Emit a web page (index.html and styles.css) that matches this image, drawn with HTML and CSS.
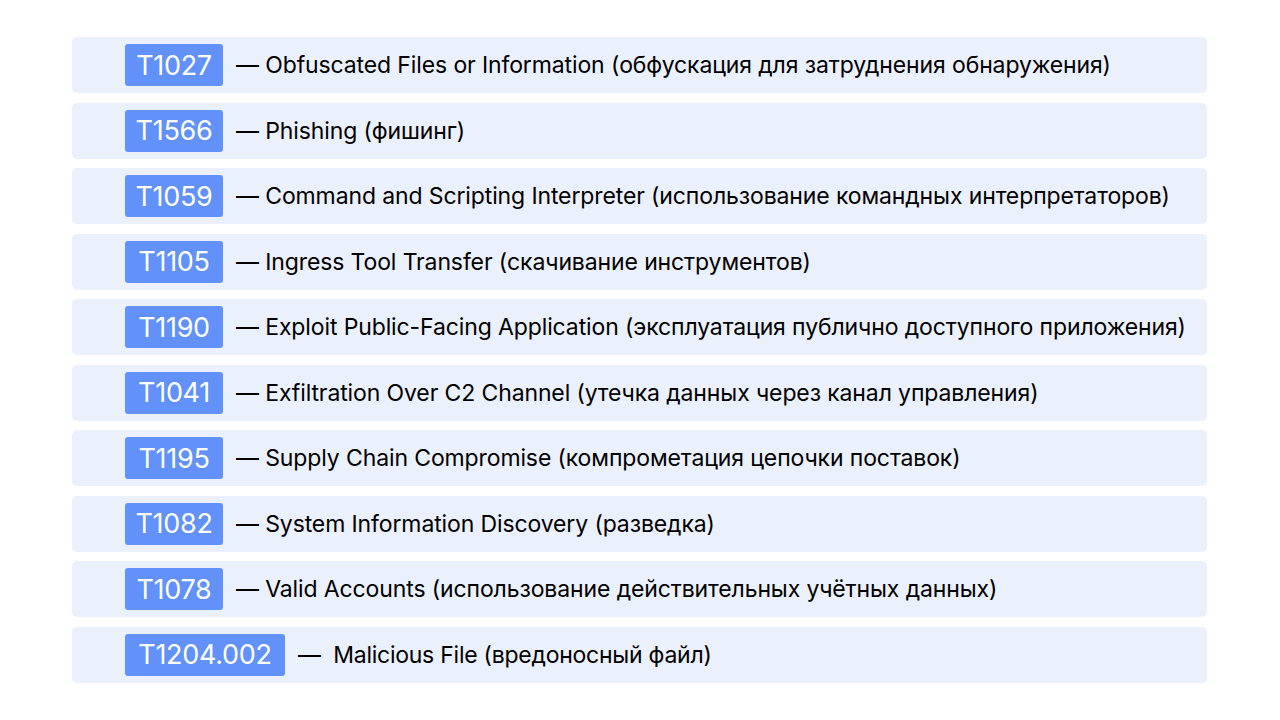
FILE: index.html
```html
<!DOCTYPE html>
<html lang="ru">
<head>
<meta charset="utf-8">
<link rel="stylesheet" href="styles.css">
</head>
<body>
<div class="list">
  <div class="row"><span class="badge">T1027</span><span class="desc">— Obfuscated Files or Information (обфускация для затруднения обнаружения)</span></div>
  <div class="row"><span class="badge">T1566</span><span class="desc">— Phishing (фишинг)</span></div>
  <div class="row"><span class="badge">T1059</span><span class="desc">— Command and Scripting Interpreter (использование командных интерпретаторов)</span></div>
  <div class="row"><span class="badge">T1105</span><span class="desc">— Ingress Tool Transfer (скачивание инструментов)</span></div>
  <div class="row"><span class="badge">T1190</span><span class="desc">— Exploit Public-Facing Application (эксплуатация публично доступного приложения)</span></div>
  <div class="row"><span class="badge">T1041</span><span class="desc">— Exfiltration Over C2 Channel (утечка данных через канал управления)</span></div>
  <div class="row"><span class="badge">T1195</span><span class="desc">— Supply Chain Compromise (компрометация цепочки поставок)</span></div>
  <div class="row"><span class="badge">T1082</span><span class="desc">— System Information Discovery (разведка)</span></div>
  <div class="row"><span class="badge">T1078</span><span class="desc">— Valid Accounts (использование действительных учётных данных)</span></div>
  <div class="row"><span class="badge badge-long">T1204.002</span><span class="desc wide">—&nbsp; Malicious File (вредоносный файл)</span></div>
</div>
</body>
</html>
```
FILE: styles.css
```css
html, body {
  margin: 0;
  padding: 0;
  background: #ffffff;
}
body {
  width: 1280px;
  height: 720px;
  overflow: hidden;
  font-family: "Inter", "Noto Sans", sans-serif;
  color: #000000;
}
.list {
  display: flex;
  flex-direction: column;
  gap: 9.5px;
  margin: 37px 0 0 72px;
  width: 1135px;
}
.row {
  height: 56px;
  background: #ebf0fd;
  border-radius: 5px;
  display: flex;
  align-items: center;
  padding-left: 53px;
  box-sizing: border-box;
}
.badge {
  background: #6191f9;
  color: #ffffff;
  border-radius: 3px;
  height: 42px;
  width: 98px;
  display: flex;
  align-items: center;
  justify-content: center;
  font-size: 27px;
  letter-spacing: -0.3px;
  margin-right: 13px;
  flex-shrink: 0;
}
.badge-long {
  width: 160px;
}
.desc {
  font-size: 23px;
  letter-spacing: -0.12px;
  white-space: nowrap;
}
.wide {
  letter-spacing: -0.25px;
}
```
